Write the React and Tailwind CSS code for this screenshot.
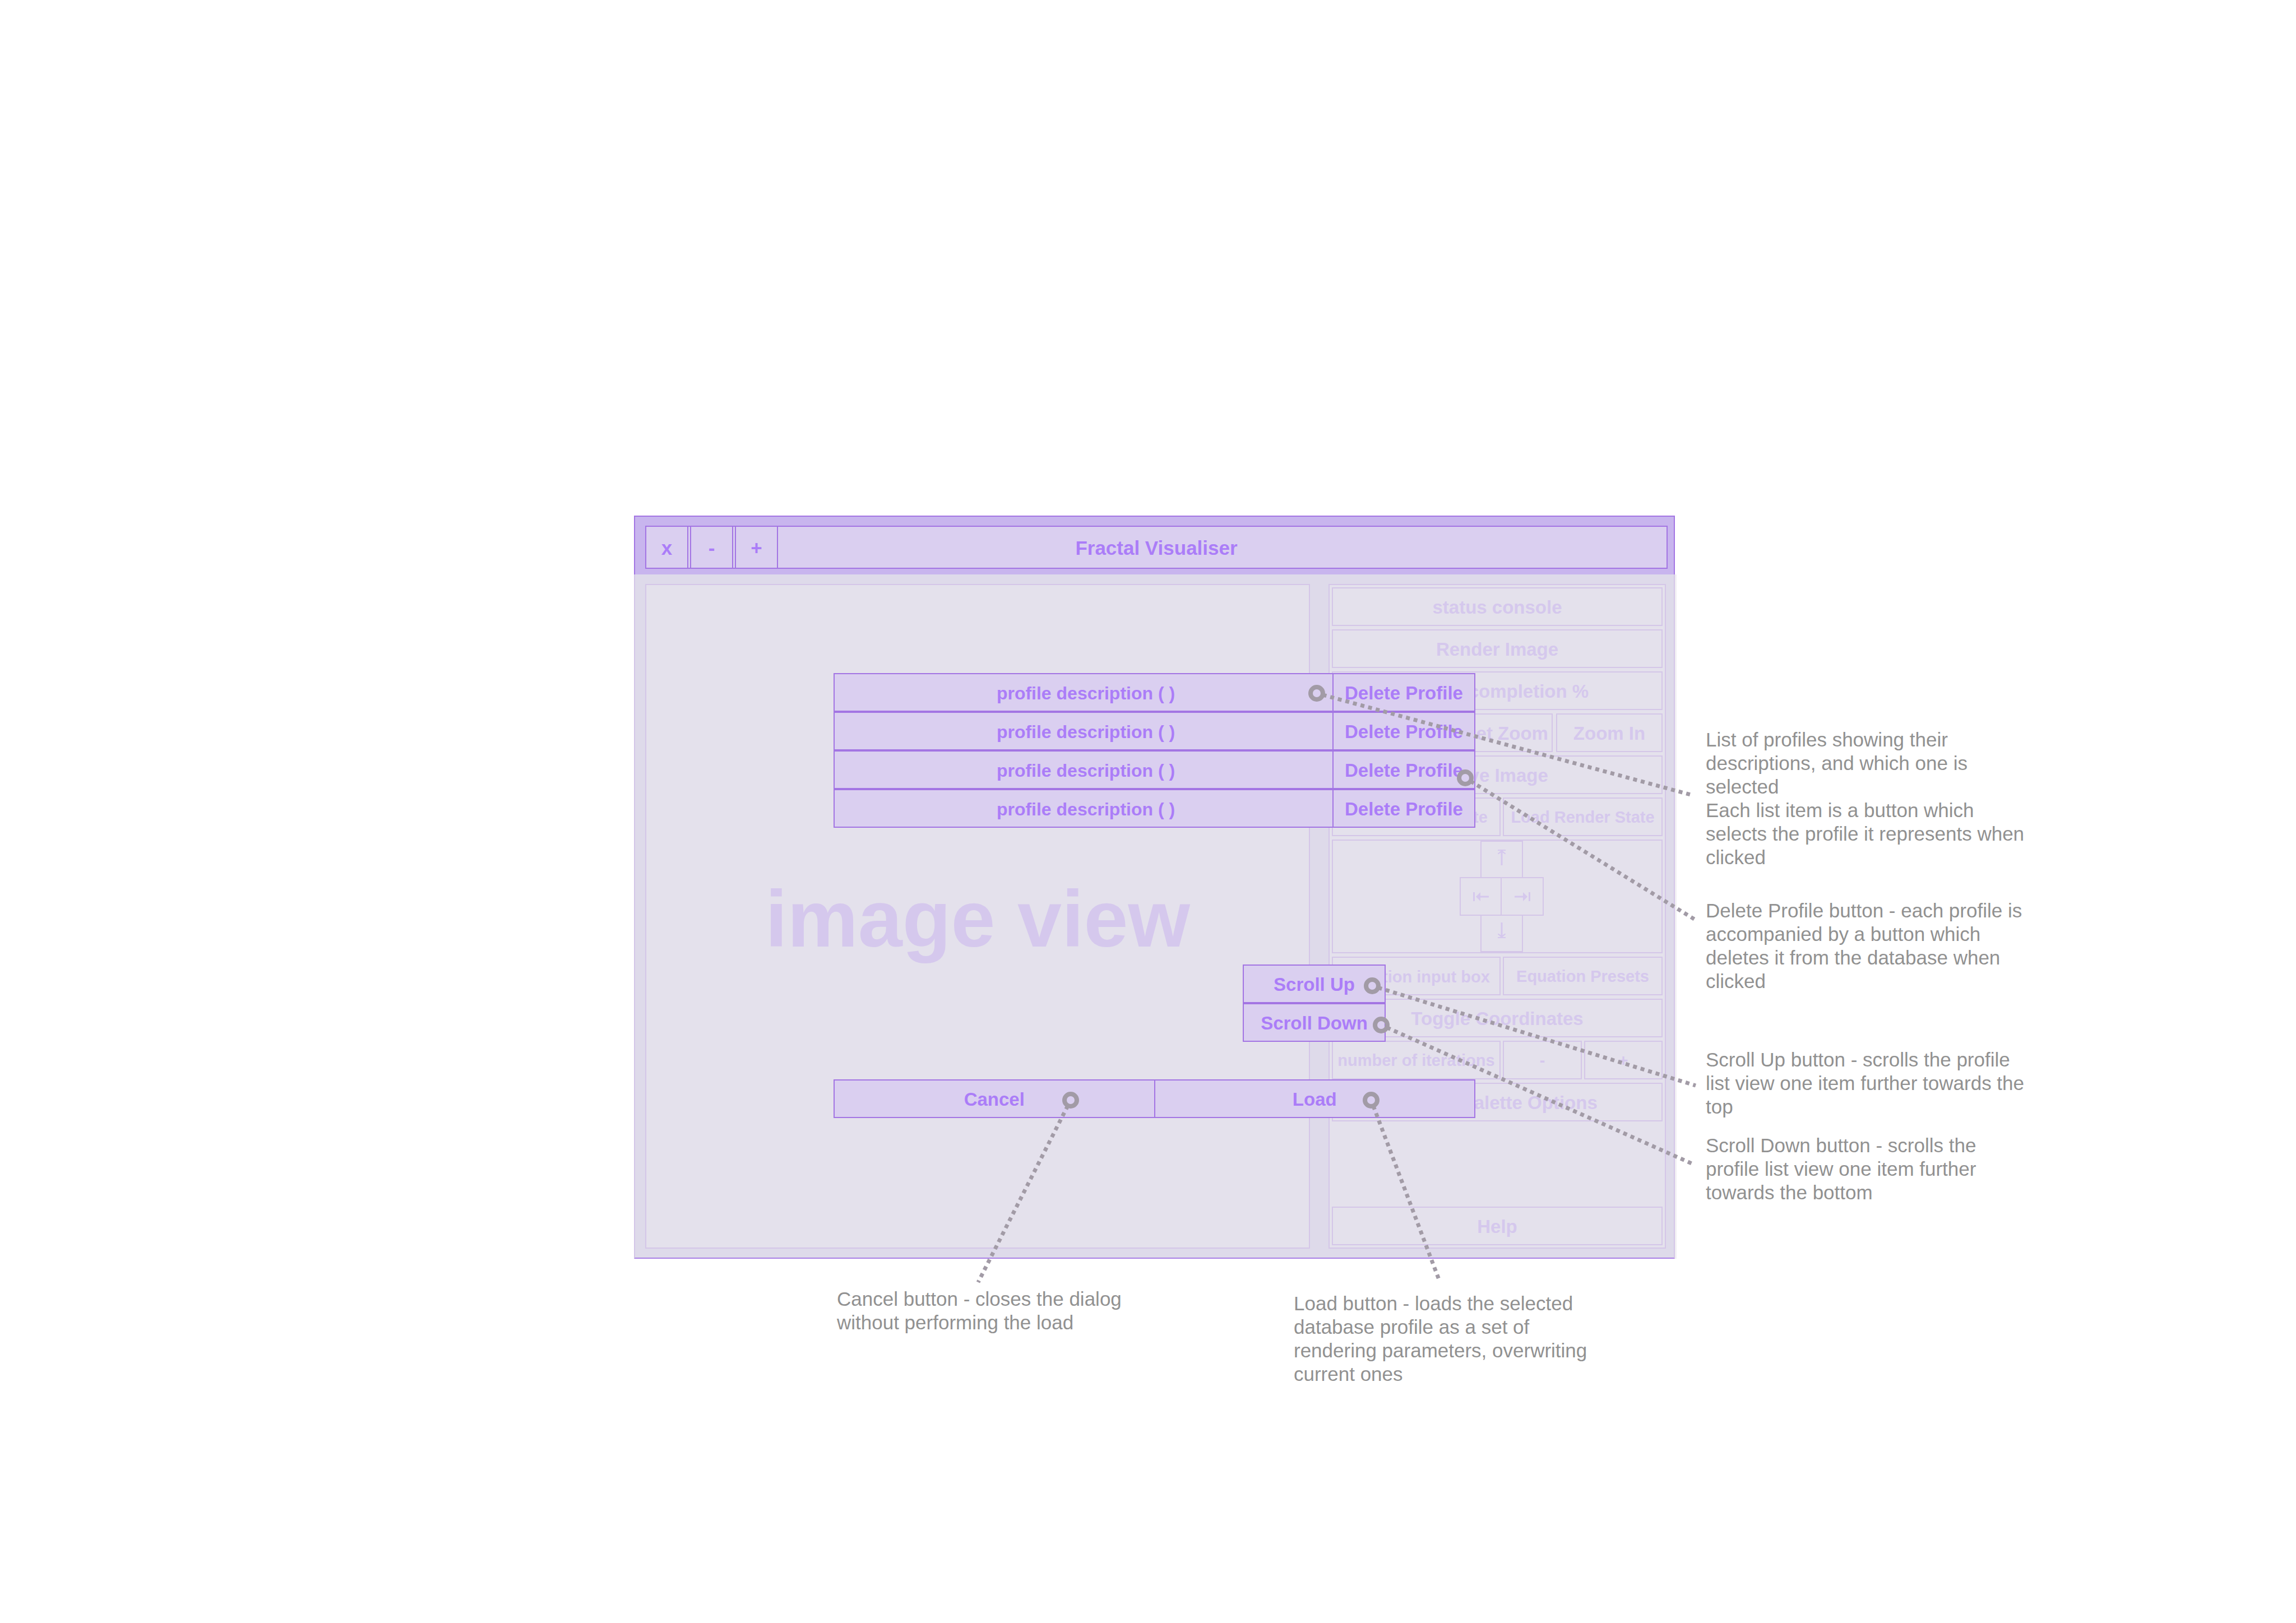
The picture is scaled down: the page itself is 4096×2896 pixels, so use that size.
import React from "react";

const PROFILES = [1, 2, 3, 4];

const CALLOUTS = [
  { from: [2349, 1237], to: [3016, 1418] },
  { from: [2614, 1388], to: [3024, 1641] },
  { from: [2448, 1759], to: [3025, 1937] },
  { from: [2464, 1829], to: [3020, 2077] },
  { from: [2446, 1963], to: [2567, 2283] },
  { from: [1910, 1963], to: [1745, 2288] },
];

function Callout({ from, to }) {
  const [x, y] = from;
  const dx = to[0] - x;
  const dy = to[1] - y;
  const length = Math.hypot(dx, dy);
  const r = 11;
  return (
    <g fill="none" stroke="#a29ba6">
      <line
        x1={x + (dx / length) * r}
        y1={y + (dy / length) * r}
        x2={to[0]}
        y2={to[1]}
        strokeWidth="7"
        strokeDasharray="7 7"
      />
      <circle cx={x} cy={y} r={r} strokeWidth="8" />
    </g>
  );
}

function Note({ className = "", children }) {
  return <p className={`text-[35px] leading-[42px] text-[#919191] ${className}`}>{children}</p>;
}

function Faded({ className = "", children }) {
  return (
    <button
      type="button"
      className={`flex h-[69px] items-center justify-center border-2 border-[#d4c6e8] pt-[3px] font-bold whitespace-nowrap text-[#d5c8ed] ${className}`}
    >
      {children}
    </button>
  );
}

function Readout({ className = "", children }) {
  return (
    <output
      className={`flex h-[69px] items-center justify-center border-2 border-[#d4c6e8] pt-[3px] font-bold whitespace-nowrap text-[#d5c8ed] ${className}`}
    >
      {children}
    </output>
  );
}

function Action({ className = "", children }) {
  return (
    <button
      type="button"
      className={`flex h-[69px] items-center justify-center border-2 border-[#a375e3] bg-[#dacff0] pt-[3px] font-bold whitespace-nowrap text-[#ab7df8] ${className}`}
    >
      {children}
    </button>
  );
}

function SideArrow({ className = "" }) {
  return (
    <svg className={`h-4 w-7 ${className}`} viewBox="0 0 28 16" fill="#d5c8ed" aria-hidden="true">
      <path d="M0 0h3v16H0zM5 8l8-8v6.500h15v3H13V16z" />
    </svg>
  );
}

function VerticalArrow({ className = "" }) {
  return (
    <svg className={`h-7 w-4 ${className}`} viewBox="0 0 16 28" fill="#d5c8ed" aria-hidden="true">
      <path d="M1 0h14v2H9.500L15 6.800V8h-1.500L9.500 5.500V28h-3V5.500L2.500 8H1V6.800L6.500 2H1z" />
    </svg>
  );
}

function TitleBar() {
  return (
    <header className="h-[105px] border-2 border-b-0 border-[#a375e3] bg-[#c8b5ee] pt-4 pr-[11px] pl-[18px] text-[35px] font-bold text-[#ab7df8]">
      <div className="grid h-[77px] grid-cols-[1fr_auto_1fr] items-stretch border-2 border-[#a375e3] bg-[#dacff0]">
        <div className="flex gap-[3px]">
          <button type="button" aria-label="Close" className="w-[75px] border-r-2 border-[#a375e3] pt-[3px]">
            x
          </button>
          <button type="button" aria-label="Minimise" className="w-[77px] border-x-2 border-[#a375e3] pt-[3px]">
            -
          </button>
          <button type="button" aria-label="Maximise" className="w-[77px] border-x-2 border-[#a375e3] pt-[3px]">
            +
          </button>
        </div>
        <h1 className="self-center pt-[3px]">Fractal Visualiser</h1>
      </div>
    </header>
  );
}

function DirectionPad() {
  return (
    <div className="flex h-[203px] flex-col items-center border-2 border-[#d4c6e8] pl-4">
      <button
        type="button"
        aria-label="Move up"
        className="flex h-[65px] w-[76px] items-center justify-center border-2 border-b-0 border-[#d4c6e8] pb-2"
      >
        <VerticalArrow />
      </button>
      <div className="flex h-[69px]">
        <button
          type="button"
          aria-label="Move left"
          className="flex w-[75px] items-center justify-center border-2 border-[#d4c6e8]"
        >
          <SideArrow />
        </button>
        <button
          type="button"
          aria-label="Move right"
          className="flex w-[75px] items-center justify-center border-2 border-l-0 border-[#d4c6e8]"
        >
          <SideArrow className="rotate-180" />
        </button>
      </div>
      <button
        type="button"
        aria-label="Move down"
        className="flex h-[65px] w-[76px] items-center justify-center border-2 border-t-0 border-[#d4c6e8] pb-3"
      >
        <VerticalArrow className="rotate-180" />
      </button>
    </div>
  );
}

function ControlPanel() {
  return (
    <aside className="flex w-[602px] shrink-0 flex-col gap-1.5 border-2 border-[#d4c6e8] bg-[#e4e1ec] p-1 text-[33px]">
      <Readout>status console</Readout>
      <Faded>Render Image</Faded>
      <Readout>render completion %</Readout>
      <div className="flex gap-1.5">
        <Faded className="flex-1">Zoom Out</Faded>
        <Faded className="w-[205px]">Reset Zoom</Faded>
        <Faded className="w-[190px]">Zoom In</Faded>
      </div>
      <Faded>Save Image</Faded>
      <div className="flex gap-1 text-[29px]">
        <Faded className="flex-1">Save Render State</Faded>
        <Faded className="w-[285px]">Load Render State</Faded>
      </div>
      <DirectionPad />
      <div className="flex gap-1 text-[29px]">
        <input
          type="text"
          aria-label="Equation"
          defaultValue="Equation input box"
          className="h-[69px] min-w-0 flex-1 border-2 border-[#d4c6e8] pt-[3px] text-center font-bold text-[#d5c8ed]"
        />
        <Faded className="w-[285px]">Equation Presets</Faded>
      </div>
      <Faded>Toggle Coordinates</Faded>
      <div className="flex gap-1 text-[29px]">
        <Readout className="flex-1">number of iterations</Readout>
        <Faded className="w-[141px]">-</Faded>
        <Faded className="w-[140px]">+</Faded>
      </div>
      <Faded>Colour Palette Options</Faded>
      <Faded className="mt-auto">Help</Faded>
    </aside>
  );
}

function LoadDialog() {
  return (
    <div role="dialog" aria-label="Load profile" className="absolute inset-0 flex justify-center pt-[281px]">
      <div className="flex w-[1145px] flex-col text-[33px]">
        <ul>
          {PROFILES.map((id) => (
            <li key={id} className="flex">
              <Action className="flex-1 border-r-0 pl-2 text-[32px]">profile description ( )</Action>
              <Action className="w-[255px]">Delete Profile</Action>
            </li>
          ))}
        </ul>
        <div className="mt-[244px] mr-40 w-[255px] self-end">
          <Action className="w-full">Scroll Up</Action>
          <Action className="w-full">Scroll Down</Action>
        </div>
        <div className="mt-[67px] flex">
          <Action className="flex-1 border-r-0">Cancel</Action>
          <Action className="flex-1">Load</Action>
        </div>
      </div>
    </div>
  );
}

export default function App() {
  return (
    <main className="relative min-h-screen bg-white pt-[920px] font-['Liberation_Sans',Arial,sans-serif]">
      <div className="grid grid-cols-[1131fr_1857fr_55fr_584fr_469fr]">
        <div className="col-start-2">
          <section className="relative">
            <TitleBar />
            <div className="flex h-[1221px] border-x-2 border-b-2 border-x-[#d4c6e8] border-b-[#a97fe5] bg-[#dedaea] pt-[17px] pr-3.5 pb-4 pl-[18px] shadow-[3px_0_0_#f1eff3]">
              <div className="mr-[33px] flex flex-1 items-center justify-center border-2 border-[#d4c6e8] bg-[#e4e1ec] pt-2 text-[142px] font-bold text-[#d5c8ed]">
                image view
              </div>
              <ControlPanel />
            </div>
            <LoadDialog />
          </section>
          <div className="flex items-start pt-[51px] pl-[362px]">
            <Note className="mr-[255px] w-[560px]">
              Cancel button - closes the dialog without performing the load
            </Note>
            <Note className="mt-2 w-[560px]">
              Load button - loads the selected database profile as a set of rendering parameters, overwriting current
              ones
            </Note>
          </div>
        </div>
        <div className="col-start-4 pt-[379px]">
          <Note>List of profiles showing their descriptions, and which one is selected</Note>
          <Note>Each list item is a button which selects the profile it represents when clicked</Note>
          <Note className="mt-[53px]">
            Delete Profile button - each profile is accompanied by a button which deletes it from the database when
            clicked
          </Note>
          <Note className="mt-[98px]">
            Scroll Up button - scrolls the profile list view one item further towards the top
          </Note>
          <Note className="mt-[27px]">
            Scroll Down button - scrolls the profile list view one item further towards the bottom
          </Note>
        </div>
      </div>
      <svg
        className="pointer-events-none absolute inset-0 h-full w-full"
        viewBox="0 0 4096 2896"
        aria-hidden="true"
      >
        {CALLOUTS.map((callout, index) => (
          <Callout key={index} {...callout} />
        ))}
      </svg>
    </main>
  );
}
